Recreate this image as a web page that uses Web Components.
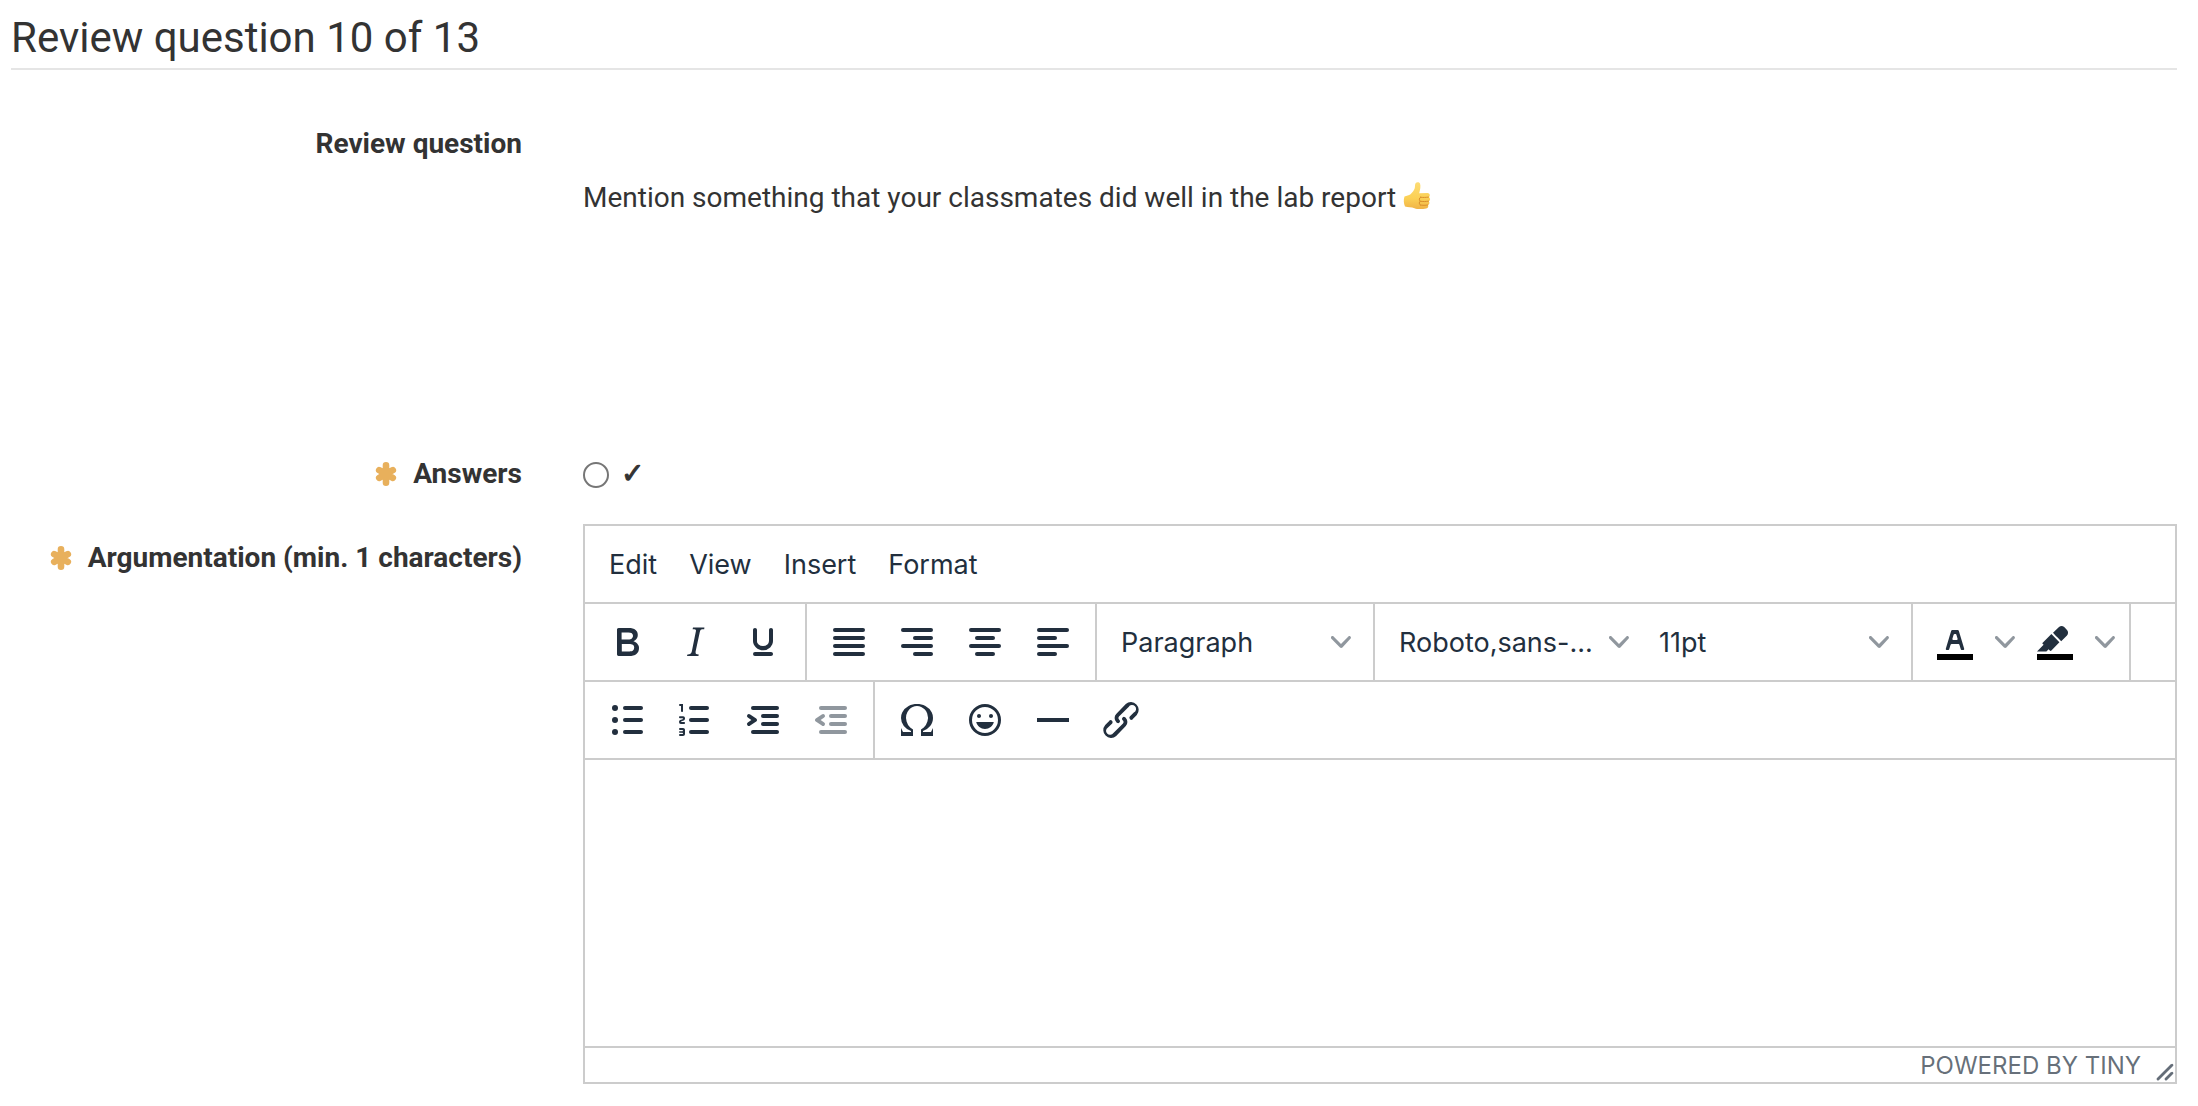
<!DOCTYPE html>
<html lang="en">
<head>
<meta charset="utf-8">
<title>Review question 10 of 13</title>
<style>
  html, body { margin: 0; background: #fff; }
  body { font-family: Roboto, "Liberation Sans", sans-serif; font-size: 28px; line-height: 40px; color: #333; }
</style>
</head>
<body>
<review-page>
  <page-legend slot="title">Review question 10 of 13</page-legend>
  <form-row label="Review question" class="question">
    <question-text>Mention something that your classmates did well in the lab report</question-text>
  </form-row>
  <form-row label="Answers" required class="answers">
    <answer-option></answer-option>
  </form-row>
  <form-row label="Argumentation (min. 1 characters)" required class="argument">
    <rich-editor></rich-editor>
  </form-row>
</review-page>

<script>
const define = (name, html, setup) => {
  const tpl = document.createElement('template');
  tpl.innerHTML = html;
  customElements.define(name, class extends HTMLElement {
    constructor() {
      super();
      this.attachShadow({ mode: 'open' }).append(tpl.content.cloneNode(true));
    }
    connectedCallback() { if (setup) setup(this, this.shadowRoot); }
  });
};

/* Rounded text line of an alignment or list icon: left edge, top edge, right edge */
const bar = (x1, y, x2) => `<rect x="${x1}" y="${y}" width="${x2 - x1}" height="2" rx="1"/>`;
const p = d => `<path fill-rule="evenodd" d="${d}"/>`;
const ICONS = {
  bold: p('M7.8 19c-.3 0-.5 0-.6-.2l-.2-.5V5.7c0-.2 0-.4.2-.5l.6-.2h5c1.5 0 2.7.3 3.5 1 .7.6 1.1 1.4 1.1 2.5a3 3 0 01-.6 1.9c-.4.6-1 1-1.6 1.2.4.1.9.3 1.3.6s.8.7 1 1.2c.4.4.5 1 .5 1.6 0 1.3-.4 2.3-1.3 3-.8.7-2.1 1-3.8 1H7.8zm5-8.3c.6 0 1.2-.1 1.6-.5.4-.3.6-.7.6-1.3 0-1.1-.8-1.7-2.3-1.7H9.3v3.5h3.4zm.5 6c.7 0 1.3-.1 1.7-.4.4-.4.6-.9.6-1.5s-.2-1-.7-1.4c-.4-.3-1-.4-2-.4H9.4v3.8h4z'),
  italic: p('M16.7 4.7l-.1.9h-.3c-.6 0-1 0-1.4.3-.3.3-.4.6-.5 1.1l-2.1 9.8v.6c0 .5.4.8 1.4.8h.2l-.2.8H8l.2-.8h.2c1.1 0 1.8-.5 2-1.5l2-9.8.1-.5c0-.6-.4-.8-1.4-.8h-.3l.2-.9h5.8z'),
  underline: p('M16 5c.6 0 1 .4 1 1v5.5a4 4 0 01-.4 1.8l-1 1.4a5.3 5.3 0 01-5.5 1 5 5 0 01-1.6-1c-.5-.4-.8-.9-1.1-1.4a4 4 0 01-.4-1.8V6c0-.6.4-1 1-1s1 .4 1 1v5.5c0 .3 0 .6.2 1l.6.7a3.3 3.3 0 002.2.8 3.4 3.4 0 002.2-.8c.3-.2.4-.5.6-.8l.2-.9V6c0-.6.4-1 1-1zM8 17h8c.6 0 1 .4 1 1s-.4 1-1 1H8a1 1 0 010-2z'),
  justify: bar(4, 5, 20) + bar(4, 9, 20) + bar(4, 13, 20) + bar(4, 17, 20),
  right: bar(4, 5, 20) + bar(10, 9, 20) + bar(4, 13, 20) + bar(10, 17, 20),
  center: bar(4, 5, 20) + bar(7, 9, 17) + bar(4, 13, 20) + bar(7, 17, 17),
  left: bar(4, 5, 20) + bar(4, 9, 14) + bar(4, 13, 20) + bar(4, 17, 14),
  bullets: bar(10, 5, 20) + bar(10, 11, 20) + bar(10, 17, 20) + '<circle cx="6" cy="6" r="1.5"/><circle cx="6" cy="12" r="1.5"/><circle cx="6" cy="18" r="1.5"/>',
  numbers: bar(9, 5, 19) + bar(9, 11, 19) + bar(9, 17, 19) + p('M6 4v3.5c0 .3-.2.5-.5.5a.5.5 0 01-.5-.5V5h-.5a.5.5 0 010-1H6zm-1 8.8l.2.2h1.3c.3 0 .5.2.5.5s-.2.5-.5.5H4.9a1 1 0 01-.9-1V13c0-.4.3-.8.6-1l1.2-.4.2-.3a.2.2 0 00-.2-.2H4.5a.5.5 0 01-.5-.5c0-.3.2-.5.5-.5h1.6c.5 0 .9.4.9 1v.1c0 .4-.3.8-.6 1l-1.2.4-.2.3zM7 17v2c0 .6-.4 1-1 1H4.5a.5.5 0 010-1h1.2c.2 0 .3-.1.3-.3 0-.2-.1-.3-.3-.3H4.4a.4.4 0 110-.8h1.3c.2 0 .3-.1.3-.3 0-.2-.1-.3-.3-.3H4.5a.5.5 0 110-1H6c.6 0 1 .4 1 1z'),
  indent: bar(6, 5, 20) + bar(11, 9, 20) + bar(11, 13, 20) + bar(6, 17, 20) + p('M4.4 13.2L6.2 12l-1.8-1.2a1 1 0 011.2-1.6l3 2a1 1 0 010 1.6l-3 2a1 1 0 11-1.2-1.6z'),
  outdent: bar(6, 5, 20) + bar(11, 9, 20) + bar(11, 13, 20) + bar(6, 17, 20) + p('M8.6 13.2a1 1 0 01-1.2 1.6l-3-2a1 1 0 010-1.6l3-2a1 1 0 011.2 1.6L6.8 12l1.8 1.2z'),
  omega: p('M15 18h4l1-2v4h-6v-3.3l1.4-1a6 6 0 001.8-2.9 6.3 6.3 0 00-.1-4.1 5.8 5.8 0 00-3-3.2c-.6-.3-1.3-.5-2.1-.5a5.1 5.1 0 00-3.9 1.8 6.3 6.3 0 00-1.3 6 6.2 6.2 0 001.8 3l1.4.9V20H4v-4l1 2h4v-.5l-2-1L5.4 15A6.5 6.5 0 014 11c0-1 .2-1.9.6-2.7A7 7 0 017.8 5C9.1 4.3 10.5 4 12 4s2.9.3 4.2 1a7 7 0 013.2 3.3c.4.8.6 1.7.6 2.7 0 1.5-.5 2.9-1.4 4L17 16.5l-2 1v.5z'),
  emoji: p('M9 11c.6 0 1-.4 1-1s-.4-1-1-1a1 1 0 00-1 1c0 .6.4 1 1 1zm6 0c.6 0 1-.4 1-1s-.4-1-1-1a1 1 0 00-1 1c0 .6.4 1 1 1zm-3 5.5c2.1 0 4-1.5 4.4-3.5H7.6c.5 2 2.3 3.5 4.4 3.5zM12 4a8 8 0 100 16 8 8 0 000-16zm0 14.5a6.5 6.5 0 110-13 6.5 6.5 0 010 13z'),
  rule: p('M4 11h16v2H4z'),
  link: p('M6.2 12.3a1 1 0 011.4 1.4l-2.1 2a2 2 0 102.7 2.8l4.8-4.8a1 1 0 000-1.4 1 1 0 111.4-1.3 2.9 2.9 0 010 4L9.6 20a3.9 3.9 0 01-5.5-5.5l2-2zm11.6-.6a1 1 0 01-1.4-1.4l2-2a2 2 0 10-2.6-2.8L11 10.3a1 1 0 000 1.4A1 1 0 119.6 13a2.9 2.9 0 010-4L14.4 4a3.9 3.9 0 015.5 5.5l-2 2z'),
  textcolor: '<path fill="#000" d="M3 18h18v3H3z"/>' + p('M8.7 16h-.8a.5.5 0 01-.5-.6l2.7-9c.1-.3.3-.4.5-.4h2.8c.2 0 .4.1.5.4l2.7 9a.5.5 0 01-.5.6h-.8a.5.5 0 01-.4-.4l-.7-2.2c0-.3-.3-.4-.5-.4h-3.4c-.2 0-.4.1-.5.4l-.7 2.2c0 .3-.2.4-.4.4zm2.6-7.6l-.6 2a.5.5 0 00.5.6h1.6a.5.5 0 00.5-.6l-.6-2c0-.3-.3-.4-.5-.4h-.4c-.2 0-.4.1-.5.4z'),
  highlight: '<path fill="#000" d="M3 18h18v3H3z"/>' + p('M7.7 16.7H3l3.3-3.3-.7-.8L10.2 8l4 4.1-4 4.2c-.2.2-.6.2-.8 0l-.6-.7-1.1 1.1zm5-7.5L11 7.4l3-2.9a2 2 0 012.6 0L18 6c.7.7.7 2 0 2.7l-2.9 2.9-1.8-1.8-.5-.6')
};
const CHEVRON = '<svg class="chev" viewBox="0 0 10 10" aria-hidden="true"><path d="M8.7 2.2c.3-.3.8-.3 1 0 .4.4.4.9 0 1.2L5.7 7.8c-.3.3-.9.3-1.2 0L.2 3.4a.8.8 0 010-1.2c.3-.3.8-.3 1.1 0L5 6l3.7-3.8z"/></svg>';

define('review-page', `
  <style>
    :host { display: block; padding: 0 21px 22px 11px; }
    form { display: flex; flex-direction: column; }
  </style>
  <slot name="title"></slot>
  <form><slot></slot></form>`);

define('page-legend', `
  <style>
    :host { display: block; border-bottom: 2px solid #e5e5e5; }
    h1 { margin: 0; padding: 8px 0 0; font-size: 42px; line-height: 60px; font-weight: 400; }
  </style>
  <h1><slot></slot></h1>`);

define('form-row', `
  <style>
    :host { display: grid; grid-template-columns: minmax(0, 511fr) minmax(0, 1594fr); column-gap: 61px; }
    :host(.question) { padding-top: 54px; min-height: 330px; }
    :host(.answers) { min-height: 70px; }
    .label { display: flex; justify-content: flex-end; align-items: center; gap: 16px; height: 40px; font-weight: 700; white-space: nowrap; }
    :host(.argument) .label { margin-top: 14px; }
    svg { width: 22px; height: 24px; display: none; }
    :host([required]) svg { display: block; }
  </style>
  <div class="label">
    <svg viewBox="0 0 22 24" aria-label="required"><g stroke="#e8b05c" stroke-width="6.6" stroke-linecap="round"><path d="M11 3.300v17.400M4.200 8.100l13.600 7.800M17.800 8.100l-13.600 7.800"/></g></svg>
    <span></span>
  </div>
  <slot></slot>`, (el, root) => { root.querySelector('span').textContent = el.getAttribute('label'); });

define('question-text', `
  <style>
    :host { display: block; padding-top: 54px; }
    p { margin: 0; }
    svg { width: 28px; height: 30px; vertical-align: -4px; }
  </style>
  <p><slot></slot> <svg viewBox="0 0 28 30" role="img" aria-label="thumbs up">
    <defs>
      <linearGradient id="skin" x1="0" y1="0" x2="0" y2="1"><stop offset="0" stop-color="#fddc74"/><stop offset=".6" stop-color="#fbd055"/><stop offset="1" stop-color="#f0b347"/></linearGradient>
    </defs>
    <path fill="url(#skin)" d="M1.500 15.500C3.500 14.500 6 14.300 7.500 13.200C9.500 11.600 11.300 9 11.800 7C12.100 5.500 11.800 3.500 12.600 2.300C13.600.8 16.200.9 17 2.600C17.900 4.900 17.200 9 16.200 12.200L24.500 11.900C27 12 27.500 15 25.800 16C27.600 16.800 27.500 19.600 25.700 20.200C27 21.200 26.600 23.500 24.900 24C25.800 25.200 25.200 27.200 23.200 27.500C19.500 28.200 14.500 28.500 11.500 27.200C8.500 25.800 5 26.500 2 25.500C.6 22.500.4 18.500 1.500 15.500Z"/>
    <path fill="none" stroke="#d98e2b" stroke-width="1" stroke-linecap="round" d="M17.500 16.200C20 16.700 23 16.400 25.500 16.100M17.200 20.200C20 20.800 23 20.500 25.500 20.200M17.200 24C19.500 24.500 22.500 24.300 24.700 24M17.500 16.200C16 16.800 16 19.500 17.200 20.200C16 21 16 23.400 17.200 24"/>
  </svg></p>`);

define('answer-option', `
  <style>
    :host { display: block; }
    label { display: flex; align-items: center; gap: 12px; height: 40px; }
    input { appearance: none; box-sizing: border-box; width: 26px; height: 26px; margin: 2px 0 0; border: 2px solid #767676; border-radius: 50%; background: #fff; }
    input:checked { box-shadow: inset 0 0 0 5px #fff; background: #333; }
    span { font-family: "DejaVu Sans", sans-serif; -webkit-text-stroke: 1px #333; }
  </style>
  <label><input type="radio" name="answer"><span>✓</span></label>`);

define('menu-bar', `
  <style>
    :host { display: flex; align-items: center; height: 76px; padding: 0 8px; border-bottom: 2px solid #ccc; }
    button { appearance: none; border: 0; background: none; margin: 0; padding: 2px 16px 0; height: 68px; font: inherit; color: inherit; }
  </style>
  <button type="button">Edit</button><button type="button">View</button><button type="button">Insert</button><button type="button">Format</button>`);

define('tool-group', `
  <style>
    :host { display: flex; align-items: center; height: 76px; padding: 0 8px; border-right: 2px solid #ccc; }
    :host([last]) { border-right: 0; }
  </style>
  <slot></slot>`);

define('tool-button', `
  <style>
    :host { display: flex; }
    button { appearance: none; border: 0; background: none; margin: 0; padding: 0; width: 68px; height: 68px; display: flex; align-items: center; justify-content: center; color: inherit; }
    button.more { width: 32px; display: none; }
    :host([split]) button.more { display: flex; }
    button:disabled { color: rgba(34, 47, 62, .5); }
    svg { width: 48px; height: 48px; fill: currentColor; display: block; }
    svg.chev { width: 20px; height: 20px; fill: rgba(34, 47, 62, .5); }
  </style>
  <button type="button" class="main"><svg viewBox="0 0 24 24" aria-hidden="true"></svg></button>
  <button type="button" class="more">${CHEVRON}</button>`, (el, root) => {
    const b = root.querySelector('.main');
    b.querySelector('svg').innerHTML = ICONS[el.getAttribute('icon')];
    b.setAttribute('aria-label', el.getAttribute('name'));
    b.disabled = el.hasAttribute('disabled');
    root.querySelector('.more').setAttribute('aria-label', el.getAttribute('name') + ' menu');
  });

define('tool-select', `
  <style>
    :host { display: grid; width: 260px; height: 68px; align-items: center; }
    select, svg { grid-area: 1 / 1; }
    select { appearance: none; box-sizing: border-box; border: 0; background: none; margin: 0; width: 100%; height: 68px; padding: 2px 36px 0 16px; font: inherit; color: inherit; }
    svg { width: 20px; height: 20px; margin-right: 14px; justify-self: end; fill: rgba(34, 47, 62, .5); pointer-events: none; }
  </style>
  <select><option></option></select>${CHEVRON}`, (el, root) => {
    root.querySelector('option').textContent = el.getAttribute('value');
    root.querySelector('select').setAttribute('aria-label', el.getAttribute('name'));
  });

define('status-bar', `
  <style>
    :host { display: flex; justify-content: flex-end; align-items: center; height: 34px; border-top: 2px solid #ccc; font-size: 24px; line-height: 32px; color: rgba(34, 47, 62, .7); }
    a { padding-top: 2px; color: inherit; text-decoration: none; }
    svg { width: 20px; height: 20px; margin-left: 14px; align-self: flex-end; fill: currentColor; }
  </style>
  <a href="#tiny">POWERED BY TINY</a>
  <svg viewBox="0 0 10 10" aria-hidden="true"><path d="M8.1 1.1A.5.5 0 119 2l-7 7A.5.5 0 111 8l7-7zM8.1 5.1A.5.5 0 119 6l-3 3A.5.5 0 115 8l3-3z"/></svg>`);

define('rich-editor', `
  <style>
    :host { display: block; border: 2px solid #ccc; font-family: Inter, "Liberation Sans", sans-serif; font-size: 27px; color: #222f3e; background: #fff; }
    .row { display: flex; border-bottom: 2px solid #ccc; }
    textarea { display: block; box-sizing: border-box; width: 100%; height: 286px; padding: 20px; border: 0; outline: 0; resize: none; background: none; font: inherit; color: inherit; }
  </style>
  <menu-bar></menu-bar>
  <div class="row">
    <tool-group><tool-button icon="bold" name="Bold"></tool-button><tool-button icon="italic" name="Italic"></tool-button><tool-button icon="underline" name="Underline"></tool-button></tool-group>
    <tool-group><tool-button icon="justify" name="Justify"></tool-button><tool-button icon="right" name="Align right"></tool-button><tool-button icon="center" name="Align center"></tool-button><tool-button icon="left" name="Align left"></tool-button></tool-group>
    <tool-group><tool-select name="Blocks" value="Paragraph"></tool-select></tool-group>
    <tool-group><tool-select name="Fonts" value="Roboto,sans-..."></tool-select><tool-select name="Font sizes" value="11pt"></tool-select></tool-group>
    <tool-group><tool-button split icon="textcolor" name="Text color"></tool-button><tool-button split icon="highlight" name="Background color"></tool-button></tool-group>
  </div>
  <div class="row">
    <tool-group><tool-button icon="bullets" name="Bullet list"></tool-button><tool-button icon="numbers" name="Numbered list"></tool-button><tool-button icon="indent" name="Increase indent"></tool-button><tool-button icon="outdent" name="Decrease indent" disabled></tool-button></tool-group>
    <tool-group last><tool-button icon="omega" name="Special character"></tool-button><tool-button icon="emoji" name="Emoticons"></tool-button><tool-button icon="rule" name="Horizontal line"></tool-button><tool-button icon="link" name="Insert link"></tool-button></tool-group>
  </div>
  <textarea aria-label="Argumentation"></textarea>
  <status-bar></status-bar>`);
</script>
</body>
</html>
